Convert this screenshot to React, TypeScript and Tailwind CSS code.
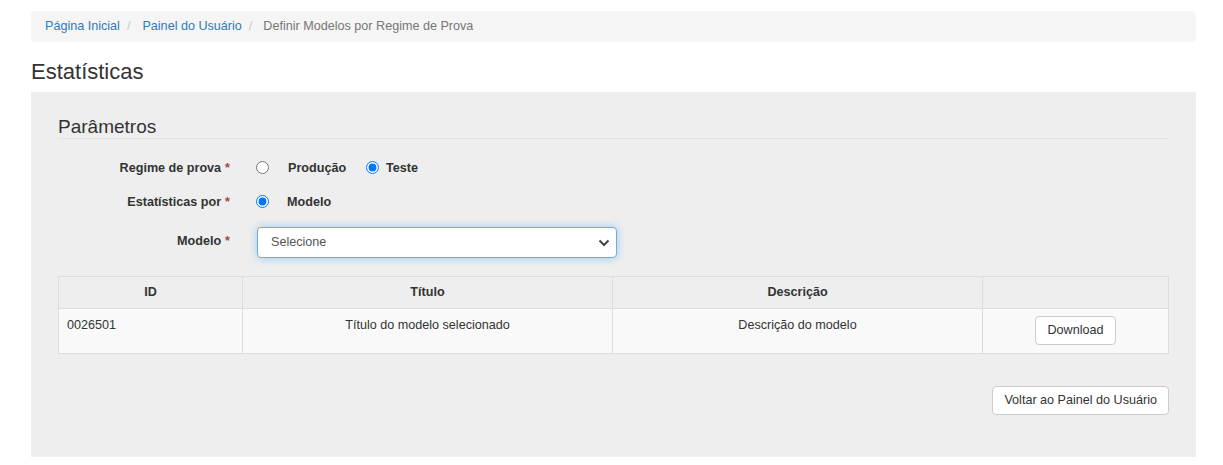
import React from "react";

const Req = () => <span className="text-[#a94442] ml-[4px]">*</span>;

const Radio = ({ checked }: { checked?: boolean }) => (
  <input
    type="radio"
    checked={!!checked}
    readOnly
    className="m-0 w-[13px] h-[13px] shrink-0"
  />
);

const Btn = ({ children }: { children: React.ReactNode }) => (
  <button className="h-[29px] px-[11px] bg-white border border-[#ccc] rounded-[4px] text-[12.6px] text-[#333] leading-none">
    {children}
  </button>
);

export default function App() {
  return (
    <div className="min-h-screen bg-white font-['Liberation_Sans',Arial,sans-serif] text-[12.6px] text-[#333]">
      <div className="pl-[31px] pr-[27px] pt-[11px]">
        {/* Breadcrumb */}
        <nav className="h-[31px] flex items-center px-[14px] bg-[#f5f5f5] rounded-[4px]">
          <a className="text-[#337ab7]">Página Inicial</a>
          <span className="text-[#ccc] ml-[7px] mr-[12px]">/</span>
          <a className="text-[#337ab7]">Painel do Usuário</a>
          <span className="text-[#ccc] ml-[7px] mr-[11px]">/</span>
          <span className="text-[#777]">Definir Modelos por Regime de Prova</span>
        </nav>

        <h1 className="mt-[17px] mb-[7px] text-[22px] leading-[26px] font-normal">Estatísticas</h1>

        {/* Panel */}
        <div className="bg-[#eeeeee] px-[27px] pt-[25px] pb-[42px]">
          <div className="text-[19px] leading-[20px] pb-[1px] border-b border-[#e2e2e2]">Parâmetros</div>

          <div className="mt-[17px] flex flex-col font-bold">
            <div className="flex items-center h-[24px]">
              <div className="w-[184px] pr-[12px] text-right">
                Regime de prova<Req />
              </div>
              <div className="ml-[14px] flex items-center">
                <Radio />
                <span className="ml-[19px]">Produção</span>
                <span className="ml-[20px] flex items-center">
                  <Radio checked />
                </span>
                <span className="ml-[7px]">Teste</span>
              </div>
            </div>

            <div className="flex items-center h-[24px] mt-[10px]">
              <div className="w-[184px] pr-[12px] text-right">
                Estatísticas por<Req />
              </div>
              <div className="ml-[14px] flex items-center">
                <Radio checked />
                <span className="ml-[18px]">Modelo</span>
              </div>
            </div>

            <div className="flex items-start mt-[13px]">
              <div className="w-[184px] pr-[12px] text-right pt-[5px]">
                Modelo<Req />
              </div>
              <div className="ml-[15px] w-[360px] h-[31px] bg-white border border-[#66afe9] rounded-[4px] shadow-[0_0_8px_rgba(102,175,233,0.6)] flex items-center justify-between pl-[13px] pr-[6px] font-normal text-[#555]">
                <span>Selecione</span>
                <svg width="12" height="8" viewBox="0 0 12 8">
                  <path d="M1.5 1.5 L6 6 L10.5 1.5" fill="none" stroke="#444" strokeWidth="2" />
                </svg>
              </div>
            </div>
          </div>

          {/* Table */}
          <table className="mt-[18px] w-full table-fixed border-collapse">
            <colgroup>
              <col className="w-[184px]" />
              <col className="w-[370px]" />
              <col className="w-[370px]" />
              <col />
            </colgroup>
            <thead>
              <tr className="bg-[#eeeeee] h-[32px]">
                <th className="border border-[#ddd] font-bold text-center">ID</th>
                <th className="border border-[#ddd] font-bold text-center">Título</th>
                <th className="border border-[#ddd] font-bold text-center">Descrição</th>
                <th className="border border-[#ddd]"></th>
              </tr>
            </thead>
            <tbody>
              <tr className="bg-[#f9f9f9] h-[45px] align-top">
                <td className="border border-[#ddd] px-[8px] pt-[7px]">0026501</td>
                <td className="border border-[#ddd] px-[8px] pt-[7px] text-center">Título do modelo selecionado</td>
                <td className="border border-[#ddd] px-[8px] pt-[7px] text-center">Descrição do modelo</td>
                <td className="border border-[#ddd] px-[8px] pt-[7px] pb-[7px] text-center">
                  <Btn>Download</Btn>
                </td>
              </tr>
            </tbody>
          </table>

          <div className="mt-[32px] flex justify-end">
            <Btn>Voltar ao Painel do Usuário</Btn>
          </div>
        </div>
      </div>
    </div>
  );
}
